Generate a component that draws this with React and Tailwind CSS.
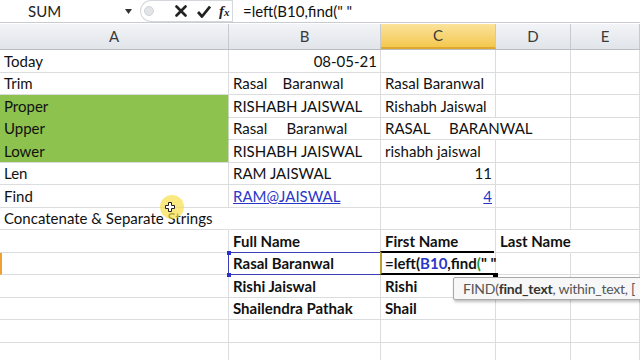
import React from 'react';

const font = { fontFamily: 'Lato, "Liberation Sans", sans-serif' };

const widths = ['w-[229px]', 'w-[152px]', 'w-[115px]', 'w-[75px]', 'flex-1'];

// each row: array of 5 cells. cell = { t, right, bold, link, noR }
const rows = [
  [{ t: 'Today' }, { t: '08-05-21', right: true }, {}, {}, {}],
  [{ t: 'Trim' }, { t: 'Rasal    Baranwal' }, { t: 'Rasal Baranwal' }, {}, {}],
  [{ t: 'Proper', green: true }, { t: 'RISHABH JAISWAL' }, { t: 'Rishabh Jaiswal' }, {}, {}],
  [{ t: 'Upper', green: true }, { t: 'Rasal     Baranwal' }, { t: 'RASAL     BARANWAL', noR: true }, {}, {}],
  [{ t: 'Lower', green: true, last: true }, { t: 'RISHABH JAISWAL' }, { t: 'rishabh jaiswal' }, {}, {}],
  [{ t: 'Len' }, { t: 'RAM JAISWAL' }, { t: '11', right: true }, {}, {}],
  [{ t: 'Find' }, { t: 'RAM@JAISWAL', link: true }, { t: '4', right: true, link: true }, {}, {}],
  [{ t: 'Concatenate & Separate Strings', noR: true }, {}, {}, {}, {}],
  [{}, { t: 'Full Name', bold: true }, { t: 'First Name', bold: true }, { t: 'Last Name', bold: true, noR: true }, {}],
  [{}, { t: 'Rasal Baranwal', bold: true, ref: true }, { edit: true }, {}, {}],
  [{}, { t: 'Rishi Jaiswal', bold: true }, { t: 'Rishi', bold: true }, {}, {}],
  [{}, { t: 'Shailendra Pathak', bold: true }, { t: 'Shail', bold: true }, {}, {}],
  [{}, {}, {}, {}, {}],
  [{}, {}, {}, {}, {}],
];

function Cell({ c, i, rowIdx }) {
  const border = c.noR ? 'border-r-transparent' : c.green ? 'border-r-[#c9d6be]' : 'border-r-[#dadcdd]';
  const bottom = c.green && !c.last ? 'border-b-[#8cc24d]' : 'border-b-[#dadcdd]';
  return (
    <div
      className={`${widths[i]} relative shrink-0 h-full border-r border-b ${bottom} ${border} ${c.green ? 'bg-[#8cc24d]' : ''} ${i === 0 && rowIdx === 9 ? 'border-l-2 border-l-[#f0a030]' : ''}`}
    >
      {c.t && (
        <div
          className={`absolute inset-x-0 bottom-0 px-[4px] pb-[1px] whitespace-pre leading-[20px] z-10 ${c.right ? 'text-right pr-[3px]' : ''} ${c.bold ? 'font-bold' : ''} ${c.link ? 'text-[#2a36c8] underline' : 'text-[#111]'}`}
        >
          {c.t}
        </div>
      )}
      {c.ref && (
        <>
          <div className="absolute inset-[-1px] border border-[#3b3fb5] z-20" />
          <div className="absolute left-[-2px] top-[-2px] w-[4px] h-[4px] bg-[#2b2fd0] z-30" />
          <div className="absolute left-[-2px] bottom-[-3px] w-[4px] h-[4px] bg-[#2b2fd0] z-30" />
        </>
      )}
      {c.edit && (
        <>
          <div className="absolute left-[-1px] top-[-2px] right-[1px] bottom-[-1px] border-t-2 border-b-2 border-l-2 border-t-black border-b-black border-l-[#b8a030] z-20" />
          <div className="absolute left-0 bottom-0 pl-[4px] pb-[1px] whitespace-pre leading-[20px] font-bold z-30 text-[#111]">
            =left(<span className="text-[#2a36c8]">B10</span>,find<span className="text-[#1f9a3a]">(</span>" "
          </div>
          <div className="absolute right-[-3px] bottom-[-4px] w-[5px] h-[5px] bg-black z-30" />
        </>
      )}
    </div>
  );
}

export default function App() {
  return (
    <div className="w-[640px] h-[360px] overflow-hidden bg-white relative text-[15px]" style={font}>
      {/* formula bar */}
      <div className="h-[23px] flex items-center border-b border-[#c8ccd2] bg-white">
        <div className="w-[140px] h-full flex items-center relative">
          <span className="ml-[28px] text-[#222]">SUM</span>
          <svg className="absolute left-[125px] top-[9px]" width="7" height="5" viewBox="0 0 7 5">
            <path d="M0 0h7L3.5 5z" fill="#333" />
          </svg>
        </div>
        <div className="w-[92px] h-full flex items-center border-l border-y border-[#d4d7dc] rounded-l-full relative">
          <div className="ml-[3px] w-[10px] h-[10px] rounded-full bg-[#e2e4e8] border border-[#d0d3d8]" />
          <svg className="ml-[21px]" width="12" height="12" viewBox="0 0 12 12">
            <path d="M1.5 1.5L10.5 10.5M10.5 1.5L1.5 10.5" stroke="#222" strokeWidth="2.6" strokeLinecap="round" />
          </svg>
          <svg className="ml-[10px]" width="14" height="13" viewBox="0 0 14 13">
            <path d="M1 7l4 4.5L13 1.5" stroke="#222" strokeWidth="2.8" fill="none" strokeLinejoin="round" />
          </svg>
          <span className="ml-[8px] italic font-bold text-[15px] text-[#222] leading-none" style={{ fontFamily: '"Liberation Serif", serif' }}>
            f<span className="text-[11px]">x</span>
          </span>
        </div>
        <div className="h-full border-l border-[#d4d7dc] flex items-center pl-[10px] text-[#111]">
          <span className="whitespace-pre">=left(B10,find(" "</span>
        </div>
      </div>
      {/* column headers */}
      <div className="h-[26px] flex mt-[1px] border-b border-[#b9bdc3] bg-gradient-to-b from-[#f2f4f7] to-[#e1e4e9]">
        {['A', 'B', 'C', 'D', 'E'].map((l, i) => (
          <div
            key={l}
            className={`${widths[i]} shrink-0 h-full flex items-center justify-center border-r border-[#c6cad0] text-[#3a3a3a] ${l === 'C' ? 'bg-gradient-to-b from-[#fbe39a] to-[#f4c84c] border-b-2 border-b-[#e0a82e]' : ''}`}
          >
            {l}
          </div>
        ))}
      </div>
      {/* grid */}
      <div className="flex flex-col">
        {rows.map((r, ri) => (
          <div key={ri} className="h-[22.5px] flex shrink-0">
            {r.map((c, ci) => (
              <Cell key={ci} c={c} i={ci} rowIdx={ri} />
            ))}
          </div>
        ))}
      </div>
      {/* tooltip */}
      <div className="absolute left-[453px] top-[277px] w-[200px] h-[23px] bg-[#f7f7f7] border border-[#a8a8a8] shadow-[1px_2px_3px_rgba(0,0,0,0.25)] rounded-[2px] z-40 flex items-center pl-[9px] text-[14px] tracking-[-0.25px] text-[#555] whitespace-pre">
        FIND(<span className="font-bold text-[#333]">find_text</span>, within_text, [
      </div>
      {/* mouse highlight */}
      <div className="absolute left-[160px] top-[195px] w-[24px] h-[24px] rounded-full bg-[#f6e04a]/70 z-40" />
      <svg className="absolute left-[165px] top-[202px] z-50" width="10" height="10" viewBox="0 0 10 10">
        <path d="M3.5 0.5h3v3h3v3h-3v3h-3v-3h-3v-3h3z" fill="#fff" stroke="#222" strokeWidth="1" />
      </svg>
    </div>
  );
}
